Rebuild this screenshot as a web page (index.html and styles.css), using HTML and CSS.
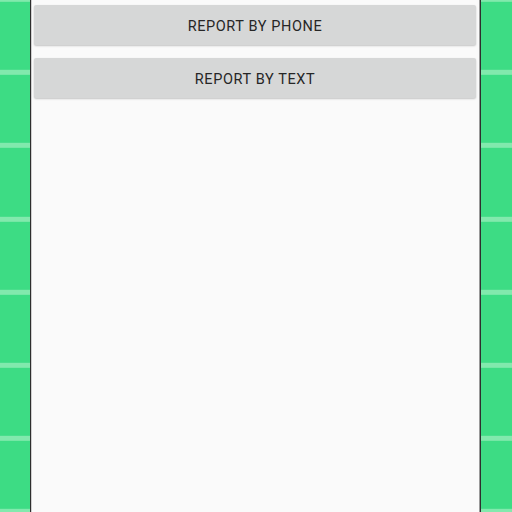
FILE: index.html
```html
<!DOCTYPE html>
<html>
<head>
<meta charset="utf-8">
<link rel="stylesheet" href="styles.css">
</head>
<body>
<div class="screen">
  <div class="side"></div>
  <div class="content">
    <button class="btn">REPORT BY PHONE</button>
    <button class="btn">REPORT BY TEXT</button>
  </div>
  <div class="side"></div>
</div>
</body>
</html>
```
FILE: styles.css
```css
html, body {
  margin: 0;
  padding: 0;
  width: 512px;
  height: 512px;
  overflow: hidden;
  background: #fafafa;
}
.screen {
  display: flex;
  width: 512px;
  height: 512px;
}
.side {
  width: 30px;
  flex: none;
  background: repeating-linear-gradient(to bottom, #82e9ad 0 5px, #3ddc84 5px 73.2px);
  background-position: 0 -3.2px;
}
.side:last-child {
  width: 31px;
}
.content {
  flex: 1;
  background: #fafafa;
  border-left: 1px solid #2e2e2e;
  border-right: 1px solid #2e2e2e;
  box-shadow: inset 1px 0 0 #cfcfcf, inset -1px 0 0 #9a9a9a;
  display: flex;
  flex-direction: column;
  gap: 13px;
  padding: 5px 4px 0 3px;
}
.btn {
  height: 40px;
  border: none;
  border-radius: 2px;
  background: #d6d7d7;
  box-shadow: 0 1px 2px rgba(0,0,0,0.22);
  font-family: Roboto, "Noto Sans", sans-serif;
  font-weight: 400;
  font-size: 14.5px;
  color: #262626;
  letter-spacing: 0.6px;
  padding: 3px 0 0 0;
  margin: 0;
}
```
